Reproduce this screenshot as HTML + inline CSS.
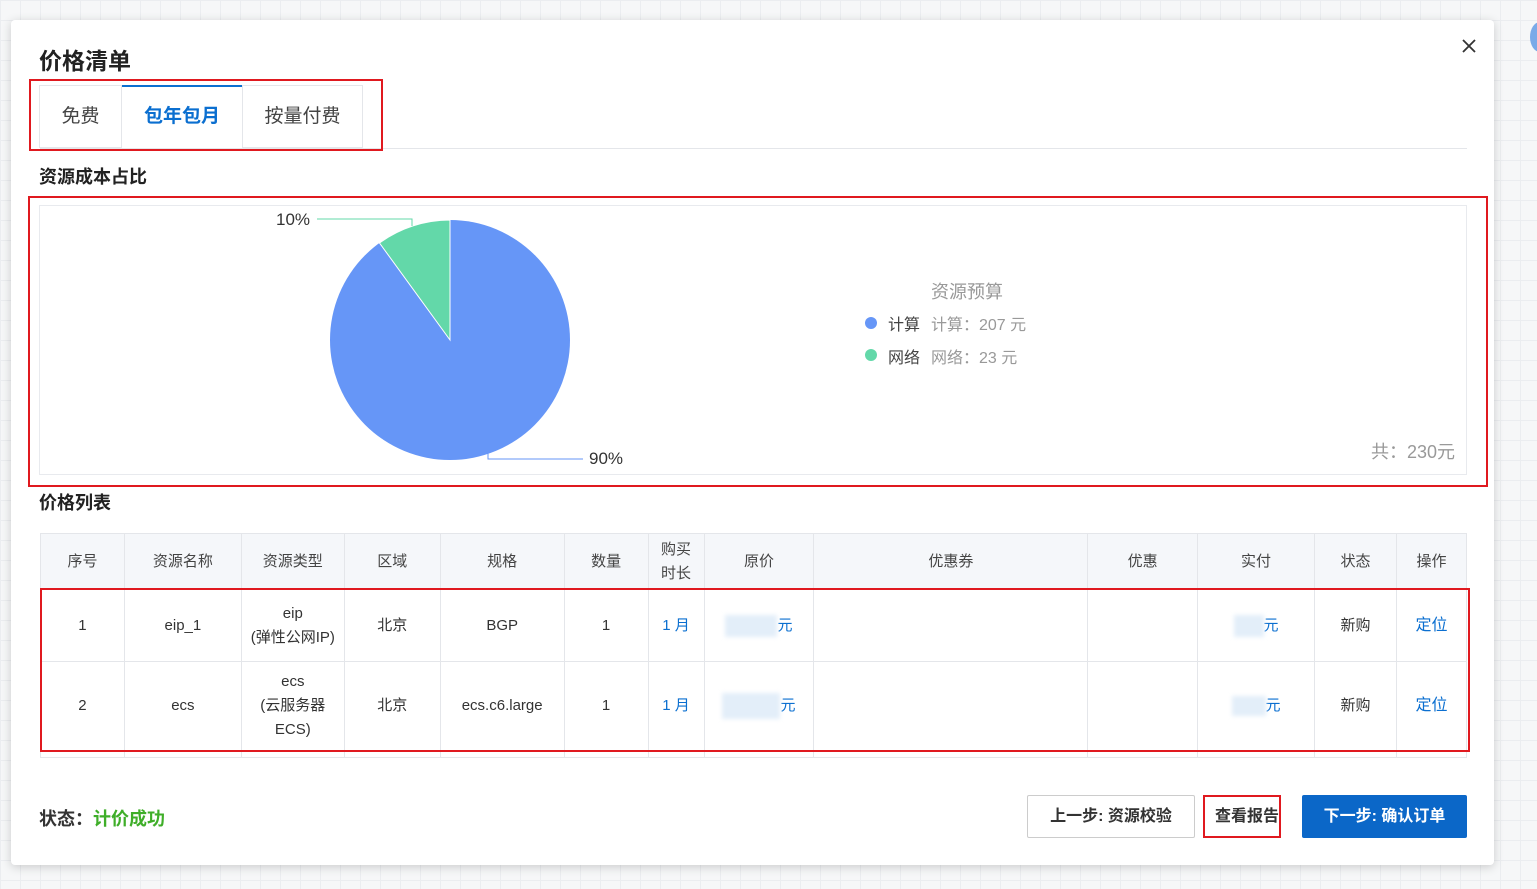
<!DOCTYPE html>
<html><head><meta charset="utf-8"><style>
*{box-sizing:border-box;margin:0;padding:0}
body{width:1537px;height:889px;position:relative;overflow:hidden;font-family:"Liberation Sans","Noto Sans CJK SC",sans-serif;color:#333;
background-color:#f6f7f8;background-image:linear-gradient(#ebedf0 1px,transparent 1px),linear-gradient(90deg,#ebedf0 1px,transparent 1px);background-size:20px 20px}
.a{position:absolute}
.modal{left:11px;top:20px;width:1483px;height:845px;background:#fff;border-radius:4px;box-shadow:0 2px 10px rgba(0,0,0,.18)}
.red{position:absolute;border:2px solid #e0191f}
table{border-collapse:collapse;position:absolute;left:40px;top:533px;width:1427px;font-size:15px;color:#333}
td,th{border:1px solid #e4e6ea;text-align:center;font-weight:normal;line-height:24px}
th{background:#f5f7fa;height:56px;color:#444;font-size:15px}
.b{color:#0b6fd0}
.blur{display:inline-block;background:#e3eef9;vertical-align:middle;filter:blur(2px)}
</style></head><body>
<div class="a" style="left:1530px;top:22px;width:20px;height:30px;border-radius:50%;background:#7aaae8"></div>
<div class="a modal"></div>
<div class="a" style="left:39px;top:42px;font-size:23px;font-weight:bold;color:#222">价格清单</div>
<svg class="a" style="left:1461px;top:38px" width="16" height="16"><path d="M2 2L14 14M14 2L2 14" stroke="#333" stroke-width="1.8"/></svg>
<div class="a" style="left:40px;top:148px;width:1427px;height:1px;background:#e4e6ea"></div>
<div class="a" style="left:39px;top:85px;width:83px;height:63px;border:1px solid #e4e6ea;font-size:19px;text-align:center;line-height:62px;color:#444">免费</div>
<div class="a" style="left:122px;top:85px;width:120px;height:63px;border-top:2px solid #0b6fd0;font-size:19px;text-align:center;line-height:60px;color:#0b6fd0;font-weight:bold">包年包月</div>
<div class="a" style="left:242px;top:85px;width:121px;height:63px;border:1px solid #e4e6ea;font-size:19px;text-align:center;line-height:62px;color:#444">按量付费</div>
<div class="red" style="left:29px;top:79px;width:354px;height:72px"></div>
<div class="a" style="left:39px;top:163px;font-size:18px;font-weight:bold;color:#222">资源成本占比</div>
<div class="a" style="left:39px;top:205px;width:1428px;height:270px;border:1px solid #e8eaee"></div>
<div class="red" style="left:28px;top:196px;width:1460px;height:291px"></div>
<svg class="a" style="left:0;top:0" width="1537" height="889">
<circle cx="450" cy="340" r="120" fill="#6696f7"/>
<path d="M450 340L450 220A120 120 0 0 0 379.5 243Z" fill="#63d8a9" stroke="#fff" stroke-width="1"/>
<polyline points="412,226 412,219 317,219" fill="none" stroke="#63d8a9"/>
<polyline points="488,453 488,459 583,459" fill="none" stroke="#6696f7"/>
<text x="276" y="225" font-size="17" fill="#333" font-family="Liberation Sans">10%</text>
<text x="589" y="464" font-size="17" fill="#333" font-family="Liberation Sans">90%</text>
<circle cx="871" cy="323" r="6" fill="#6696f7"/>
<circle cx="871" cy="355" r="6" fill="#63d8a9"/>
</svg>
<div class="a" style="left:931px;top:278px;font-size:18px;color:#999">资源预算</div>
<div class="a" style="left:888px;top:311px;font-size:16px;color:#444">计算</div>
<div class="a" style="left:931px;top:311px;font-size:16px;color:#999">计算：207 元</div>
<div class="a" style="left:888px;top:344px;font-size:16px;color:#444">网络</div>
<div class="a" style="left:931px;top:344px;font-size:16px;color:#999">网络：23 元</div>
<div class="a" style="left:1371px;top:438px;font-size:18px;color:#999">共：230元</div>
<div class="a" style="left:39px;top:489px;font-size:18px;font-weight:bold;color:#222">价格列表</div>
<table>
<colgroup><col style="width:84px"><col style="width:117px"><col style="width:103px"><col style="width:96px"><col style="width:124px"><col style="width:84px"><col style="width:56px"><col style="width:110px"><col style="width:274px"><col style="width:110px"><col style="width:117px"><col style="width:82px"><col style="width:70px"></colgroup>
<tr><th>序号</th><th>资源名称</th><th>资源类型</th><th>区域</th><th>规格</th><th>数量</th><th style="line-height:24px">购买<br>时长</th><th>原价</th><th>优惠券</th><th>优惠</th><th>实付</th><th>状态</th><th>操作</th></tr>
<tr style="height:72px"><td>1</td><td>eip_1</td><td>eip<br>(弹性公网IP)</td><td>北京</td><td>BGP</td><td>1</td><td class="b">1 月</td><td><span class="blur" style="width:52px;height:22px"></span><span class="b">元</span></td><td></td><td></td><td><span class="blur" style="width:30px;height:22px"></span><span class="b">元</span></td><td>新购</td><td class="b" style="font-size:16px">定位</td></tr>
<tr style="height:89px"><td>2</td><td>ecs</td><td>ecs<br>(云服务器<br>ECS)</td><td>北京</td><td>ecs.c6.large</td><td>1</td><td class="b">1 月</td><td><span class="blur" style="width:58px;height:26px"></span><span class="b">元</span></td><td></td><td></td><td><span class="blur" style="width:34px;height:20px"></span><span class="b">元</span></td><td>新购</td><td class="b" style="font-size:16px">定位</td></tr>
<tr style="height:7px"><td></td><td></td><td></td><td></td><td></td><td></td><td></td><td></td><td></td><td></td><td></td><td></td><td></td></tr>
</table>
<div class="red" style="left:40px;top:588px;width:1430px;height:164px"></div>
<div class="a" style="left:39px;top:805px;font-size:18px;font-weight:bold;color:#333">状态：<span style="color:#3fae29">计价成功</span></div>
<div class="a" style="left:1027px;top:795px;width:168px;height:43px;border:1px solid #ccc;border-radius:2px;text-align:center;line-height:41px;font-size:16px;font-weight:bold;color:#333">上一步: 资源校验</div>
<div class="a" style="left:1203px;top:795px;width:78px;height:43px;border:2px solid #e0191f"></div>
<div class="a" style="left:1215px;top:795px;height:43px;line-height:43px;font-size:16px;font-weight:bold;color:#333">查看报告</div>
<div class="a" style="left:1302px;top:795px;width:165px;height:43px;background:#0b67c8;border-radius:2px;text-align:center;line-height:43px;font-size:16px;font-weight:bold;color:#fff">下一步: 确认订单</div>
</body></html>
